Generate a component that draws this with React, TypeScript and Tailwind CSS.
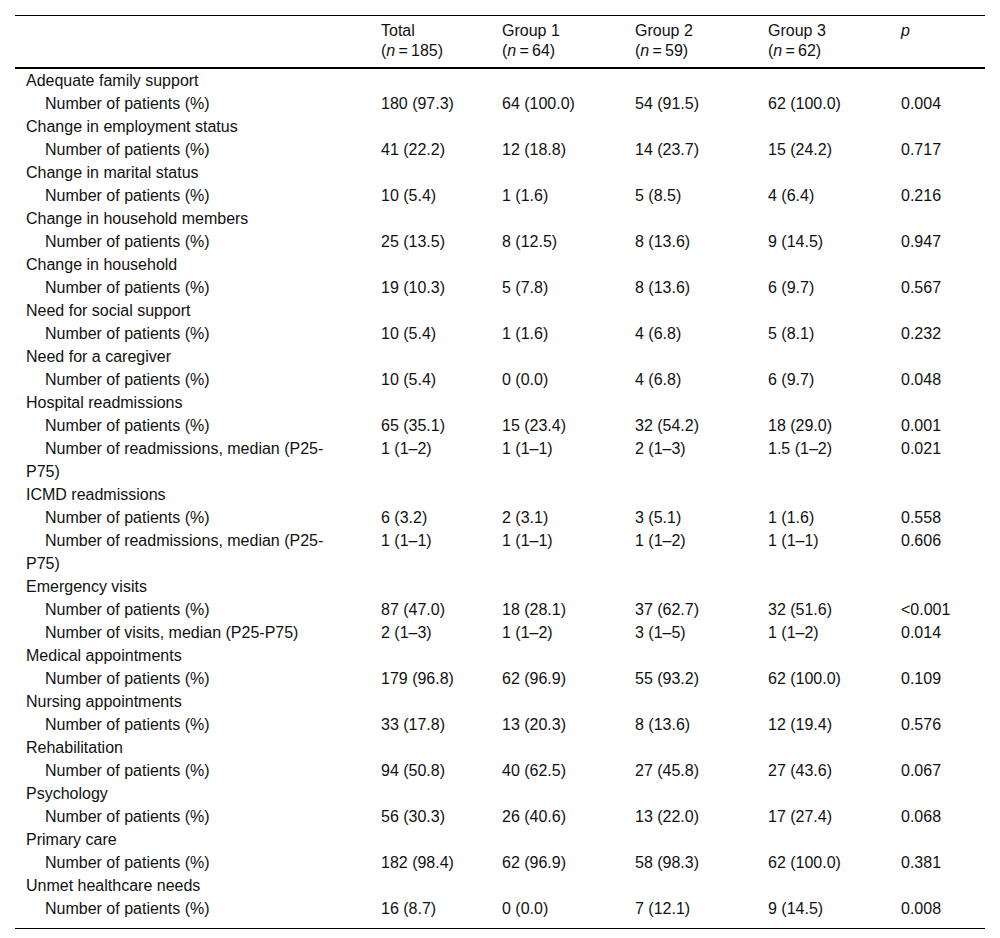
import React from "react";

type Row = { label: string; sub?: boolean; v?: string[] };

const rows: Row[] = [
  { label: "Adequate family support" },
  { label: "Number of patients (%)", sub: true, v: ["180 (97.3)", "64 (100.0)", "54 (91.5)", "62 (100.0)", "0.004"] },
  { label: "Change in employment status" },
  { label: "Number of patients (%)", sub: true, v: ["41 (22.2)", "12 (18.8)", "14 (23.7)", "15 (24.2)", "0.717"] },
  { label: "Change in marital status" },
  { label: "Number of patients (%)", sub: true, v: ["10 (5.4)", "1 (1.6)", "5 (8.5)", "4 (6.4)", "0.216"] },
  { label: "Change in household members" },
  { label: "Number of patients (%)", sub: true, v: ["25 (13.5)", "8 (12.5)", "8 (13.6)", "9 (14.5)", "0.947"] },
  { label: "Change in household" },
  { label: "Number of patients (%)", sub: true, v: ["19 (10.3)", "5 (7.8)", "8 (13.6)", "6 (9.7)", "0.567"] },
  { label: "Need for social support" },
  { label: "Number of patients (%)", sub: true, v: ["10 (5.4)", "1 (1.6)", "4 (6.8)", "5 (8.1)", "0.232"] },
  { label: "Need for a caregiver" },
  { label: "Number of patients (%)", sub: true, v: ["10 (5.4)", "0 (0.0)", "4 (6.8)", "6 (9.7)", "0.048"] },
  { label: "Hospital readmissions" },
  { label: "Number of patients (%)", sub: true, v: ["65 (35.1)", "15 (23.4)", "32 (54.2)", "18 (29.0)", "0.001"] },
  { label: "Number of readmissions, median (P25-P75)", sub: true, v: ["1 (1\u20132)", "1 (1\u20131)", "2 (1\u20133)", "1.5 (1\u20132)", "0.021"] },
  { label: "ICMD readmissions" },
  { label: "Number of patients (%)", sub: true, v: ["6 (3.2)", "2 (3.1)", "3 (5.1)", "1 (1.6)", "0.558"] },
  { label: "Number of readmissions, median (P25-P75)", sub: true, v: ["1 (1\u20131)", "1 (1\u20131)", "1 (1\u20132)", "1 (1\u20131)", "0.606"] },
  { label: "Emergency visits" },
  { label: "Number of patients (%)", sub: true, v: ["87 (47.0)", "18 (28.1)", "37 (62.7)", "32 (51.6)", "<0.001"] },
  { label: "Number of visits, median (P25-P75)", sub: true, v: ["2 (1\u20133)", "1 (1\u20132)", "3 (1\u20135)", "1 (1\u20132)", "0.014"] },
  { label: "Medical appointments" },
  { label: "Number of patients (%)", sub: true, v: ["179 (96.8)", "62 (96.9)", "55 (93.2)", "62 (100.0)", "0.109"] },
  { label: "Nursing appointments" },
  { label: "Number of patients (%)", sub: true, v: ["33 (17.8)", "13 (20.3)", "8 (13.6)", "12 (19.4)", "0.576"] },
  { label: "Rehabilitation" },
  { label: "Number of patients (%)", sub: true, v: ["94 (50.8)", "40 (62.5)", "27 (45.8)", "27 (43.6)", "0.067"] },
  { label: "Psychology" },
  { label: "Number of patients (%)", sub: true, v: ["56 (30.3)", "26 (40.6)", "13 (22.0)", "17 (27.4)", "0.068"] },
  { label: "Primary care" },
  { label: "Number of patients (%)", sub: true, v: ["182 (98.4)", "62 (96.9)", "58 (98.3)", "62 (100.0)", "0.381"] },
  { label: "Unmet healthcare needs" },
  { label: "Number of patients (%)", sub: true, v: ["16 (8.7)", "0 (0.0)", "7 (12.1)", "9 (14.5)", "0.008"] },
];

const heads: [string, string][] = [
  ["Total", "185"],
  ["Group 1", "64"],
  ["Group 2", "59"],
  ["Group 3", "62"],
];

export default function App() {
  const last = rows.length - 1;
  return (
    <div className="bg-white min-h-[938px] pt-[15px] pl-[15px] text-[#111]" style={{ fontFamily: '"Liberation Sans", Arial, sans-serif' }}>
      <table className="w-[970px] table-fixed border-collapse text-[16px] border-t border-b border-black">
        <colgroup>
          <col className="w-[355px]" />
          <col className="w-[121px]" />
          <col className="w-[133px]" />
          <col className="w-[133px]" />
          <col className="w-[133px]" />
          <col className="w-[95px]" />
        </colgroup>
        <thead>
          <tr className="border-b-2 border-black">
            <th className="pl-[11px] pt-[5px] pb-[6px]" />
            {heads.map(([h, n]) => (
              <th key={h} className="pl-[11px] pt-[5px] pb-[6px] text-left font-normal align-top leading-[20px]">
                <div>{h}</div>
                <div>
                  (<span className="italic">n</span>
                  {"\u2009=\u2009"}
                  {n})
                </div>
              </th>
            ))}
            <th className="pl-[11px] pt-[5px] pb-[6px] text-left font-normal align-top leading-[20px]">
              <span className="italic">p</span>
            </th>
          </tr>
        </thead>
        <tbody>
          {rows.map((r, i) => {
            const pb = i === last ? " pb-[8px]" : "";
            return (
              <tr key={i} className="leading-[23px] align-top">
                <td className={(r.sub ? "pl-[11px] pr-[30px] indent-[19px]" : "pl-[11px] pr-[30px]") + pb}>{r.label}</td>
                {r.v
                  ? r.v.map((x, j) => (
                      <td key={j} className={"pl-[11px]" + pb}>
                        {x}
                      </td>
                    ))
                  : [0, 1, 2, 3, 4].map((j) => <td key={j} />)}
              </tr>
            );
          })}
        </tbody>
      </table>
    </div>
  );
}
